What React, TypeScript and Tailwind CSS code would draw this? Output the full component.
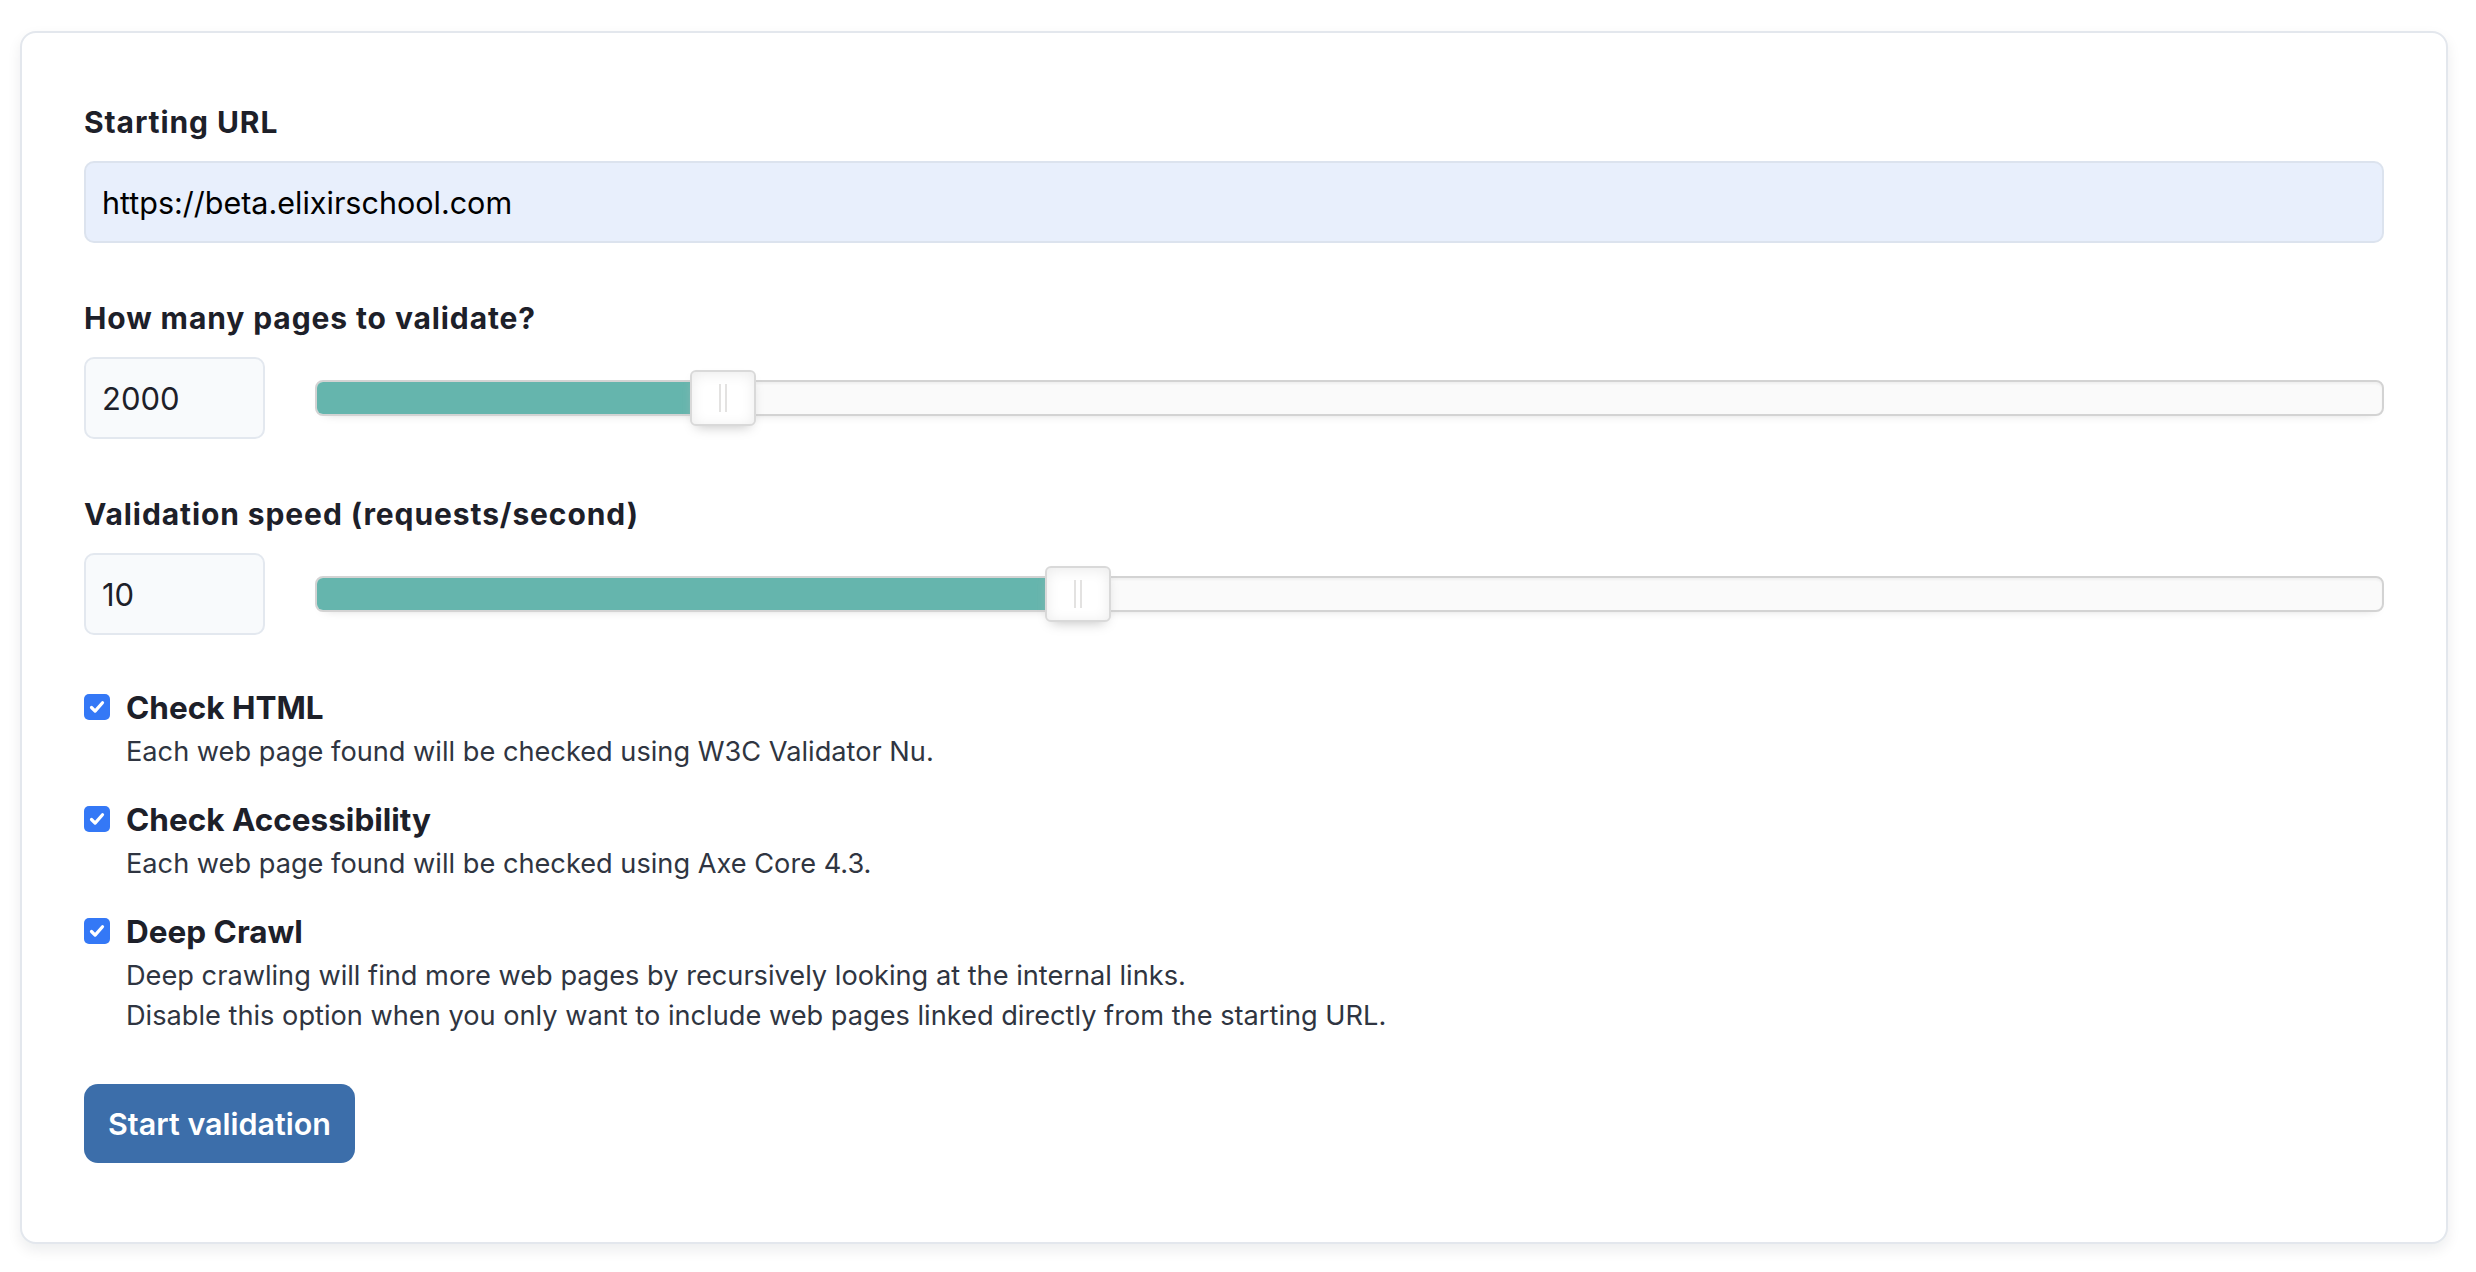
function Slider({ pct }: { pct: number }) {
  return (
    <div className="relative h-[36px] flex-1 rounded-[8px] border-2 border-[#d3d3d3] bg-[#fafafa] shadow-[inset_0_2px_2px_#f0f0f0,0_6px_12px_-10px_#bbbbbb]">
      <div className="h-full rounded-l-[6px] bg-[#65b5ad]" style={{ width: `${pct}%` }} />
      <div
        className="absolute top-[-12px] flex h-[56px] w-[66px] -translate-x-1/2 items-center justify-center gap-[4px] rounded-[6px] border-2 border-[#d9d9d9] bg-white shadow-[inset_0_2px_14px_#ebebeb,0_6px_12px_-6px_#bbbbbb]"
        style={{ left: `${pct}%` }}
      >
        <span className="h-[28px] w-[2px] bg-[#e3e2e1]" />
        <span className="h-[28px] w-[2px] bg-[#e3e2e1]" />
      </div>
    </div>
  );
}

function Check() {
  return (
    <div className="mt-[6px] flex h-[26px] w-[26px] shrink-0 items-center justify-center rounded-[5px] bg-[#3478f6]">
      <svg width="18" height="18" viewBox="0 0 18 18" fill="none">
        <path d="M3.5 9.5l3.6 3.6L14.5 4.8" stroke="white" strokeWidth="3.2" strokeLinecap="round" strokeLinejoin="round" />
      </svg>
    </div>
  );
}

const options = [
  { title: 'Check HTML', lines: ['Each web page found will be checked using W3C Validator Nu.'] },
  { title: 'Check Accessibility', lines: ['Each web page found will be checked using Axe Core 4.3.'] },
  {
    title: 'Deep Crawl',
    lines: [
      'Deep crawling will find more web pages by recursively looking at the internal links.',
      'Disable this option when you only want to include web pages linked directly from the starting URL.',
    ],
  },
];

export default function App() {
  const label = 'block text-[30px] leading-[40px] font-bold tracking-[0.03em] text-[#1d2029]';
  const numBox =
    'h-[82px] w-[181px] shrink-0 rounded-[10px] border-2 border-[#e3e8ef] bg-[#f8fafc] px-[16px] text-[31px] text-[#1d2029] outline-none';

  return (
    <div className="min-h-screen bg-white pt-[31px] pr-[28px] pl-[20px] font-['Inter','Noto_Sans',sans-serif]">
      <div className="rounded-[16px] border-2 border-[#e3e7ed] bg-white px-[62px] pt-[69px] pb-[79px] shadow-[0_6px_14px_rgba(15,23,42,0.08)]">
        <label className={label}>Starting URL</label>
        <input
          readOnly
          value="https://beta.elixirschool.com"
          className="mt-[19px] block h-[82px] w-full rounded-[10px] border-2 border-[#dce3ee] bg-[#e8effc] px-[16px] text-[30.5px] text-black outline-none"
        />

        <label className={`${label} mt-[55px]`}>How many pages to validate?</label>
        <div className="mt-[19px] flex items-center gap-[50px]">
          <input readOnly value="2000" className={numBox} />
          <Slider pct={19.67} />
        </div>

        <label className={`${label} mt-[55px]`}>Validation speed (requests/second)</label>
        <div className="mt-[19px] flex items-center gap-[50px]">
          <input readOnly value="10" className={numBox} />
          <Slider pct={36.87} />
        </div>

        <div className="mt-[53px] flex flex-col gap-[28px]">
          {options.map((o) => (
            <div key={o.title} className="flex gap-[16px]">
              <Check />
              <div>
                <div className="text-[31.5px] leading-[40px] font-bold text-[#1d2029]">{o.title}</div>
                <div className="mt-[4px] text-[27.2px] leading-[40px] text-[#2f3541]">
                  {o.lines.map((l) => (
                    <div key={l}>{l}</div>
                  ))}
                </div>
              </div>
            </div>
          ))}
        </div>

        <button className="mt-[48px] h-[79px] rounded-[14px] bg-[#3c6eaa] px-[24px] text-[30.5px] font-semibold text-white">
          Start validation
        </button>
      </div>
    </div>
  );
}
